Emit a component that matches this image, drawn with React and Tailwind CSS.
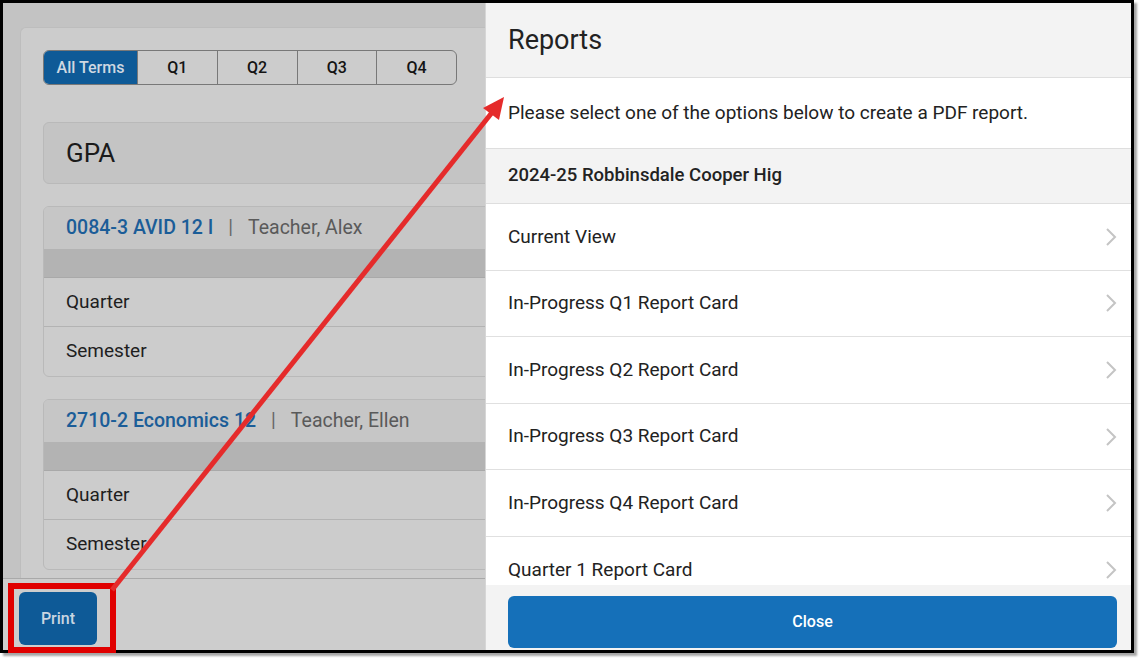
import React from "react";

const terms = ["Q1", "Q2", "Q3", "Q4"];

const reports = [
  "Current View",
  "In-Progress Q1 Report Card",
  "In-Progress Q2 Report Card",
  "In-Progress Q3 Report Card",
  "In-Progress Q4 Report Card",
  "Quarter 1 Report Card",
];

const courses = [
  { code: "0084-3 AVID 12 I", teacher: "Teacher, Alex" },
  { code: "2710-2 Economics 12", teacher: "Teacher, Ellen" },
];

function Chevron() {
  return (
    <svg width="12" height="20" viewBox="0 0 12 20" fill="none">
      <path d="M2 2l8 8-8 8" stroke="#c4c4c4" strokeWidth="2" />
    </svg>
  );
}

function CourseCard({ code, teacher }) {
  return (
    <div className="w-[700px] rounded-md border border-[#b9b9b9] overflow-hidden">
      {/* header */}
      <div className="h-[42px] bg-[#c6c6c6] flex items-center pl-[22px] text-[19.5px]">
        <span className="font-medium text-[#1b5d98]">{code}</span>
        <span className="text-[#666] mx-[15px]">|</span>
        <span className="text-[#5a5a5a]">{teacher}</span>
      </div>
      <div className="h-[29px] bg-[#b3b3b3] border-b border-[#a9a9a9]" />
      <div className="h-[49px] flex items-center pl-[22px] text-[19px] text-[#1e1e1e] border-b border-[#b3b3b3]">
        Quarter
      </div>
      <div className="h-[49px] flex items-center pl-[22px] text-[19px] text-[#1e1e1e]">
        Semester
      </div>
    </div>
  );
}

export default function App() {
  return (
    <div
      className="w-[1140px] h-[660px] bg-white relative"
      style={{ fontFamily: "Roboto, 'Liberation Sans', sans-serif" }}
    >
      <div className="w-[1134px] h-[653px] border-[3px] border-black flex overflow-hidden shadow-[3px_3px_2px_rgba(0,0,0,0.35)]">
        {/* Left, dimmed page */}
        <div className="w-[482px] shrink-0 flex flex-col bg-[#c3c3c3]">
          <div className="flex-1 overflow-hidden pl-[17px] pt-[24px]">
            <div className="w-[600px] h-full bg-[#cccccc] rounded-tl-md border-t border-l border-[#bdbdbd] p-[22px]">
              {/* term tabs */}
              <div className="flex h-[35px] w-[414px] rounded-md border border-[#787878] overflow-hidden text-[16px] font-medium">
                <div className="w-[93px] bg-[#0e5a97] text-[#cfd8e1] flex items-center justify-center">
                  All Terms
                </div>
                {terms.map((t) => (
                  <div
                    key={t}
                    className="flex-1 border-l border-[#787878] text-[#141414] flex items-center justify-center"
                  >
                    {t}
                  </div>
                ))}
              </div>

              {/* GPA */}
              <div className="mt-[37px] h-[62px] w-[700px] rounded-md border border-[#b9b9b9] bg-[#c4c4c4] flex items-center pl-[22px] text-[26px] text-[#1b1b1b]">
                GPA
              </div>

              <div className="mt-[22px] flex flex-col gap-[22px]">
                {courses.map((c) => (
                  <CourseCard key={c.code} code={c.code} teacher={c.teacher} />
                ))}
              </div>
            </div>
          </div>

          {/* bottom action bar */}
          <div className="h-[72px] shrink-0 bg-[#cdcdcd] border-t border-[#a9a9a9] pl-[16px] pt-[13px]">
            <button className="w-[78px] h-[53px] rounded-md bg-[#0e5a97] text-[#c9d5e1] text-[16px] font-medium">
              Print
            </button>
          </div>
        </div>

        {/* Right, reports panel */}
        <div className="flex-1 flex flex-col bg-white border-l border-[#d6d6d6]">
          <div className="h-[75px] shrink-0 bg-[#f3f3f3] border-b border-[#dedede] flex items-center pl-[22px] text-[27px] text-[#222]">
            Reports
          </div>
          <div className="h-[71px] shrink-0 border-b border-[#dedede] flex items-center pl-[22px] text-[19px] text-[#222]">
            Please select one of the options below to create a PDF report.
          </div>
          <div className="h-[55px] shrink-0 bg-[#f3f3f3] border-b border-[#dedede] flex items-center pl-[22px] text-[18.5px] font-medium text-[#222]">
            2024-25 Robbinsdale Cooper Hig
          </div>
          <div className="flex-1 overflow-hidden">
            {reports.map((r) => (
              <div
                key={r}
                className="h-[66.6px] border-b border-[#e0e0e0] flex items-center justify-between pl-[22px] pr-[14px] text-[19px] text-[#222]"
              >
                <span>{r}</span>
                <Chevron />
              </div>
            ))}
          </div>
          <div className="h-[65px] shrink-0 bg-[#f3f3f3] pl-[22px] pr-[14px] pt-[11px] pb-[2px]">
            <button className="w-full h-[52px] rounded-md bg-[#1570b9] text-white text-[16px] font-medium">
              Close
            </button>
          </div>
        </div>
      </div>

      {/* red callout annotation */}
      <div className="absolute left-[8px] top-[583px] w-[108px] h-[70px] border-[6px] border-[#e00000]" />
      <svg
        className="absolute left-0 top-0 pointer-events-none"
        width="1140"
        height="660"
        viewBox="0 0 1140 660"
      >
        <line x1="112" y1="590" x2="494" y2="110" stroke="#e52b2b" strokeWidth="5" />
        <polygon points="504,97 483,108 499,120" fill="#e52b2b" />
      </svg>
    </div>
  );
}
